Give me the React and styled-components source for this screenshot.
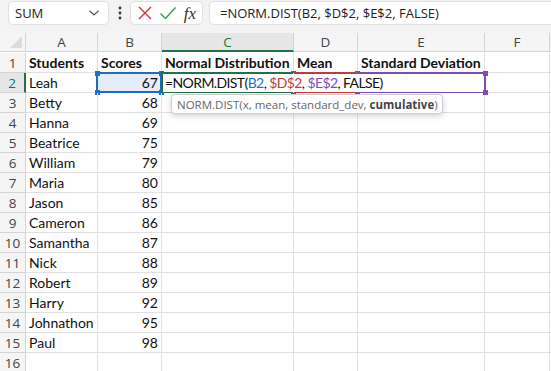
import React from "react";
import styled, { createGlobalStyle, css } from "styled-components";

const Global = createGlobalStyle`
  html, body { margin: 0; padding: 0; background: #fff; overflow: hidden; }
  body { font-family: "Open Sans", "Noto Sans", sans-serif; }
`;

const COLORS = {
  blue: "#1f6cc1",
  red: "#c23b3b",
  purple: "#7d4cb7",
  green: "#217346",
};

const Page = styled.div`
  width: 551px;
  height: 371px;
  overflow: hidden;
  background: #fff;
`;

const Toolbar = styled.div`
  display: flex;
  align-items: flex-start;
  height: 33px;
  padding: 1px 0 0 8px;
  box-sizing: border-box;
  background: #f3f3f3;
`;

const Box = styled.div`
  height: 24px;
  box-sizing: border-box;
  background: #fff;
  border: 1px solid #e0e0e0;
  border-radius: 5px;
  display: flex;
  align-items: center;
`;

const NameBox = styled(Box)`
  width: 101px;
  padding: 0 8px 0 6px;
  justify-content: space-between;
  font-size: 13px;
  color: #222;
`;

const Dots = styled.div`
  width: 21px;
  height: 24px;
  display: flex;
  align-items: center;
  justify-content: center;
`;

const IconBox = styled(Box)`
  width: 73px;
  padding: 0 4px 0 6px;
  justify-content: space-between;
`;

const Fx = styled.span`
  font-family: "Liberation Serif", "DejaVu Serif", serif;
  font-style: italic;
  font-size: 17px;
  color: #333;
  margin-right: 2px;
  line-height: 1;
`;

const FormulaBox = styled(Box)`
  flex: 1;
  margin-left: 6px;
  border-right: none;
  border-radius: 5px 0 0 5px;
  padding-left: 10px;
  font-size: 13px;
  color: #222;
  white-space: nowrap;
`;

const Grid = styled.div`
  display: grid;
  grid-template-columns: 26px 72px 64px 132px 64px 127px 65px 1fr;
  grid-auto-rows: 20px;
`;

const HeadCell = styled.div`
  position: relative;
  box-sizing: border-box;
  height: ${(p) => (p.$top ? "19px" : "20px")};
  background: ${(p) => (p.$sel ? "#e6e6e6" : "#f5f5f5")};
  border-right: 1px solid #d4d4d4;
  border-bottom: 1px solid #d4d4d4;
  display: flex;
  align-items: center;
  justify-content: center;
  font-size: 13.5px;
  color: ${(p) => (p.$sel ? COLORS.green : "#444")};
  ${(p) =>
    p.$sel && p.$top &&
    css`
      border-bottom: 2px solid ${COLORS.green};
    `}
  ${(p) =>
    p.$sel && !p.$top &&
    css`
      border-right: 2px solid ${COLORS.green};
    `}
`;

const HeaderRow = styled.div`
  display: contents;
`;

const Corner = styled(HeadCell)`
  &::after {
    content: "";
    position: absolute;
    right: 3px;
    bottom: 3px;
    width: 0;
    height: 0;
    border-left: 12px solid transparent;
    border-bottom: 12px solid #dcdcdc;
  }
`;

const Cell = styled.div`
  position: relative;
  box-sizing: border-box;
  border-right: 1px solid #e1e1e1;
  border-bottom: 1px solid #e1e1e1;
  font-family: "Lato", "Open Sans", sans-serif;
  font-size: 14px;
  color: #111;
  font-weight: ${(p) => (p.$bold ? 700 : 400)};
  text-align: ${(p) => (p.$num ? "right" : "left")};
  padding: 0 ${(p) => (p.$num ? "3px" : "2px")} 0 3px;
  line-height: 19px;
  white-space: nowrap;
  background: ${(p) => (p.$fill ? "#e4edf8" : "transparent")};
  overflow: visible;
  z-index: ${(p) => p.$z || 0};
`;

const Frame = styled.div`
  position: absolute;
  left: -2px;
  top: -1px;
  right: ${(p) => (p.$wide ? "-2px" : "-1px")};
  bottom: -1px;
  border: 2px solid ${(p) => p.$color};
  pointer-events: none;
  z-index: 3;
`;

const Handle = styled.span`
  position: absolute;
  width: 5px;
  height: 5px;
  background: ${(p) => p.$color};
  ${(p) => (p.$v === "t" ? "top: -3.5px;" : "bottom: -3.5px;")}
  ${(p) => (p.$h === "l" ? "left: -3.5px;" : "right: -3.5px;")}
`;

const EditFrame = styled.div`
  position: absolute;
  left: -1px;
  top: -1px;
  right: 0;
  bottom: -1px;
  border: 2px solid ${COLORS.green};
  border-right: none;
  pointer-events: none;
  z-index: 2;
`;

const EditBox = styled.div`
  position: absolute;
  left: 1px;
  top: 1px;
  width: 320px;
  height: 18px;
  background: #fff;
  padding-left: 2px;
  box-sizing: border-box;
  line-height: 17px;
  letter-spacing: -0.6px;
  z-index: 5;
`;

const Ref = styled.span`
  color: ${(p) => p.$color};
`;

const Tip = styled.div`
  position: absolute;
  left: 9px;
  top: 21px;
  height: 20px;
  box-sizing: border-box;
  padding: 0 4px 0 5px;
  display: flex;
  align-items: center;
  background: #fff;
  border: 1px solid #cfcfcf;
  border-radius: 4px;
  box-shadow: 0 2px 6px rgba(0, 0, 0, 0.18);
  font-family: "Open Sans", sans-serif;
  font-size: 11.5px;
  letter-spacing: 0;
  color: #666;
  z-index: 6;
  b {
    color: #444;
    font-weight: 700;
  }
`;

function RefFrame({ color, wide }) {
  return (
    <Frame $color={color} $wide={wide}>
      <Handle $color={color} $v="t" $h="l" />
      <Handle $color={color} $v="t" $h="r" />
      <Handle $color={color} $v="b" $h="l" />
      <Handle $color={color} $v="b" $h="r" />
    </Frame>
  );
}

const data = [
  ["Leah", 67],
  ["Betty", 68],
  ["Hanna", 69],
  ["Beatrice", 75],
  ["William", 79],
  ["Maria", 80],
  ["Jason", 85],
  ["Cameron", 86],
  ["Samantha", 87],
  ["Nick", 88],
  ["Robert", 89],
  ["Harry", 92],
  ["Johnathon", 95],
  ["Paul", 98],
];

const cols = ["A", "B", "C", "D", "E", "F"];

function Chevron() {
  return (
    <svg width="12" height="8" viewBox="0 0 12 8">
      <path d="M1.5 1.8 L6 6 L10.5 1.8" fill="none" stroke="#555" strokeWidth="1.2" />
    </svg>
  );
}

function VDots() {
  return (
    <svg width="4" height="14" viewBox="0 0 4 14">
      <circle cx="2" cy="2" r="1.4" fill="#333" />
      <circle cx="2" cy="7" r="1.4" fill="#333" />
      <circle cx="2" cy="12" r="1.4" fill="#333" />
    </svg>
  );
}

function Cross() {
  return (
    <svg width="16" height="16" viewBox="0 0 16 16">
      <path d="M2 2 L14 14 M14 2 L2 14" stroke="#d13438" strokeWidth="1.4" fill="none" />
    </svg>
  );
}

function Check() {
  return (
    <svg width="18" height="16" viewBox="0 0 18 16">
      <path d="M1.5 8.5 L6.5 13.5 L16.5 2.5" stroke="#2e9b4e" strokeWidth="1.4" fill="none" />
    </svg>
  );
}

export default function App() {
  return (
    <Page>
      <Global />
      <Toolbar>
        <NameBox>
          <span>SUM</span>
          <Chevron />
        </NameBox>
        <Dots>
          <VDots />
        </Dots>
        <IconBox>
          <Cross />
          <Check />
          <Fx>fx</Fx>
        </IconBox>
        <FormulaBox>=NORM.DIST(B2, $D$2, $E$2, FALSE)</FormulaBox>
      </Toolbar>
      <Grid>
        <HeaderRow>
          <Corner $top />
          {cols.map((c) => (
            <HeadCell key={c} $top $sel={c === "C"}>
              {c}
            </HeadCell>
          ))}
          <HeadCell $top />
        </HeaderRow>

        <HeadCell>1</HeadCell>
        <Cell $bold>Students</Cell>
        <Cell $bold>Scores</Cell>
        <Cell $bold>Normal Distribution</Cell>
        <Cell $bold>Mean</Cell>
        <Cell $bold>Standard Deviation</Cell>
        <Cell />
        <Cell />

        {data.map(([name, score], i) => {
          const row = i + 2;
          if (row === 2) {
            return (
              <React.Fragment key={row}>
                <HeadCell $sel>{row}</HeadCell>
                <Cell>{name}</Cell>
                <Cell $num $fill>
                  {score}
                  <RefFrame color={COLORS.blue} />
                </Cell>
                <Cell $z={4}>
                  <EditFrame />
                  <EditBox>
                    =NORM.DIST(<Ref $color={COLORS.blue}>B2</Ref>,{" "}
                    <Ref $color={COLORS.red}>$D$2</Ref>,{" "}
                    <Ref $color={COLORS.purple}>$E$2</Ref>, FALSE)
                  </EditBox>
                  <Tip>
                    NORM.DIST(x, mean, standard_dev,&nbsp;<b>cumulative</b>)
                  </Tip>
                </Cell>
                <Cell $z={3}>
                  <RefFrame color={COLORS.red} />
                </Cell>
                <Cell $z={3}>
                  <RefFrame color={COLORS.purple} wide />
                </Cell>
                <Cell />
                <Cell />
              </React.Fragment>
            );
          }
          return (
            <React.Fragment key={row}>
              <HeadCell>{row}</HeadCell>
              <Cell>{name}</Cell>
              <Cell $num>{score}</Cell>
              <Cell />
              <Cell />
              <Cell />
              <Cell />
              <Cell />
            </React.Fragment>
          );
        })}
        <HeadCell>16</HeadCell>
        <Cell />
        <Cell />
        <Cell />
        <Cell />
        <Cell />
        <Cell />
        <Cell />
      </Grid>
    </Page>
  );
}
